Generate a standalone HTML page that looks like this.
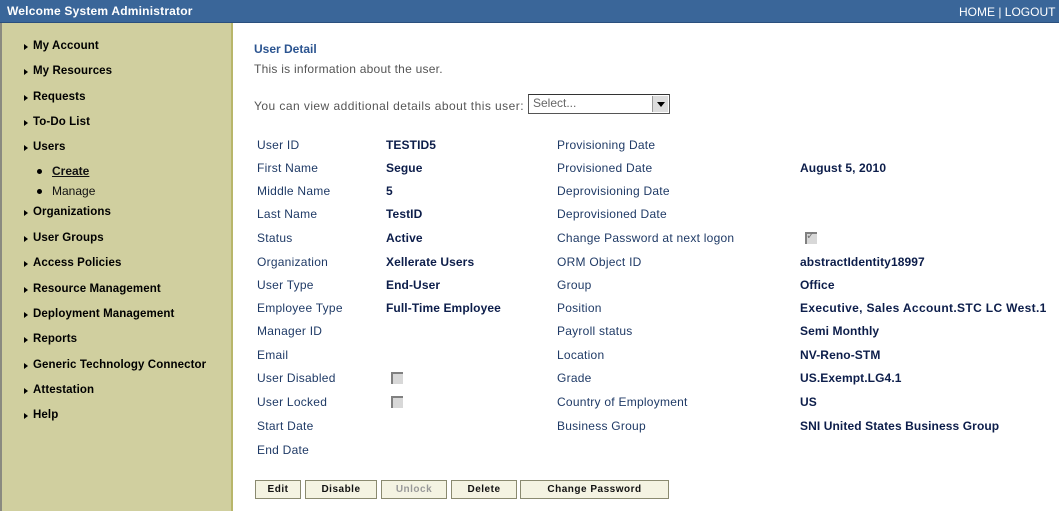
<!DOCTYPE html><html><head><style>
body{margin:0;width:1059px;height:511px;overflow:hidden;background:#fff;font-family:"Liberation Sans",Arial,sans-serif;position:relative}
.hdr{position:absolute;left:0;top:0;width:1059px;height:22px;background:#3a6699;border-bottom:1px solid #2a4f7d;color:#fff;font-size:12px;white-space:nowrap;overflow:hidden}
.side{position:absolute;left:0;top:23px;width:233px;height:488px;background:#d0cf9f;border-left:2px solid #8a8a80;border-right:2px solid #b8b66a;box-sizing:border-box}
.m{position:absolute;left:33px;font-size:11.5px;font-weight:bold;color:#000;transform:translateY(-50%);letter-spacing:.1px}
.m:before{content:"";position:absolute;left:-9px;top:4px;border-left:4px solid #000;border-top:3.5px solid transparent;border-bottom:3.5px solid transparent}
.s{position:absolute;left:52px;font-size:12px;color:#111;transform:translateY(-50%)}
.s:before{content:"";position:absolute;left:-15px;top:5px;width:5px;height:5px;border-radius:50%;background:#000}
.t{position:absolute;font-size:12px;color:#1f3a66;transform:translateY(-50%);white-space:nowrap;letter-spacing:.25px}
.v{position:absolute;font-size:12px;font-weight:bold;color:#0c1d4a;transform:translateY(-50%);white-space:nowrap;letter-spacing:.1px}
.cb{position:absolute;width:12px;height:12px;background:#d8d8d8;border-top:2px solid #808080;border-left:2px solid #808080;box-sizing:border-box}
.b{position:absolute;top:480px;height:19px;background:#f4f3e2;border:1px solid #8a8a70;box-sizing:border-box;font-size:10px;font-weight:bold;letter-spacing:.5px;text-align:center;line-height:17px;color:#111}
</style></head><body>
<div class="hdr"><span style="position:absolute;left:7px;top:4px;font-weight:bold;letter-spacing:.2px">Welcome System Administrator</span><span style="position:absolute;left:959px;top:5px">HOME | LOGOUT | A</span></div>
<div class="side"></div>
<div class="m" style="top:46px">My Account</div>
<div class="m" style="top:71px">My Resources</div>
<div class="m" style="top:97px">Requests</div>
<div class="m" style="top:122px">To-Do List</div>
<div class="m" style="top:147px">Users</div>
<div class="s" style="top:171px;font-weight:bold;text-decoration:underline">Create</div>
<div class="s" style="top:191px">Manage</div>
<div class="m" style="top:212px">Organizations</div>
<div class="m" style="top:238px">User Groups</div>
<div class="m" style="top:263px">Access Policies</div>
<div class="m" style="top:289px">Resource Management</div>
<div class="m" style="top:314px">Deployment Management</div>
<div class="m" style="top:339px">Reports</div>
<div class="m" style="top:365px">Generic Technology Connector</div>
<div class="m" style="top:390px">Attestation</div>
<div class="m" style="top:415px">Help</div>

<div class="t" style="left:254px;top:49px;font-weight:bold;color:#2b5490;letter-spacing:0">User Detail</div>
<div class="t" style="left:254px;top:69px;color:#555">This is information about the user.</div>
<div class="t" style="left:254px;top:106px;color:#555;letter-spacing:.45px">You can view additional details about this user:</div>
<div style="position:absolute;left:528px;top:94px;width:142px;height:20px;border:1px solid #555;border-top-color:#333;box-sizing:border-box;background:#fff;font-size:12px;color:#666;padding:1px 4px">Select...<div style="position:absolute;right:1px;top:1px;width:15px;height:16px;background:#ddd;border-left:1px solid #999"><div style="position:absolute;left:4px;top:6px;border-top:5px solid #000;border-left:4px solid transparent;border-right:4px solid transparent"></div></div></div>

<div class="t" style="left:257px;top:145px">User ID</div><div class="v" style="left:386px;top:145px">TESTID5</div><div class="t" style="left:557px;top:145px">Provisioning Date</div>
<div class="t" style="left:257px;top:168px">First Name</div><div class="v" style="left:386px;top:168px">Segue</div><div class="t" style="left:557px;top:168px">Provisioned Date</div><div class="v" style="left:800px;top:168px">August 5, 2010</div>
<div class="t" style="left:257px;top:191px">Middle Name</div><div class="v" style="left:386px;top:191px">5</div><div class="t" style="left:557px;top:191px">Deprovisioning Date</div>
<div class="t" style="left:257px;top:214px">Last Name</div><div class="v" style="left:386px;top:214px">TestID</div><div class="t" style="left:557px;top:214px">Deprovisioned Date</div>
<div class="t" style="left:257px;top:238px">Status</div><div class="v" style="left:386px;top:238px">Active</div><div class="t" style="left:557px;top:238px">Change Password at next logon</div>
<div class="cb" style="left:805px;top:232px"></div><div style="position:absolute;left:806px;top:229px;font-size:11px;color:#777">✓</div>
<div class="t" style="left:257px;top:262px">Organization</div><div class="v" style="left:386px;top:262px">Xellerate Users</div><div class="t" style="left:557px;top:262px">ORM Object ID</div><div class="v" style="left:800px;top:262px">abstractIdentity18997</div>
<div class="t" style="left:257px;top:285px">User Type</div><div class="v" style="left:386px;top:285px">End-User</div><div class="t" style="left:557px;top:285px">Group</div><div class="v" style="left:800px;top:285px">Office</div>
<div class="t" style="left:257px;top:308px">Employee Type</div><div class="v" style="left:386px;top:308px">Full-Time Employee</div><div class="t" style="left:557px;top:308px">Position</div><div class="v" style="left:800px;top:308px;letter-spacing:.35px">Executive, Sales Account.STC LC West.1</div>
<div class="t" style="left:257px;top:331px">Manager ID</div><div class="t" style="left:557px;top:331px">Payroll status</div><div class="v" style="left:800px;top:331px">Semi Monthly</div>
<div class="t" style="left:257px;top:355px">Email</div><div class="t" style="left:557px;top:355px">Location</div><div class="v" style="left:800px;top:355px">NV-Reno-STM</div>
<div class="t" style="left:257px;top:378px">User Disabled</div><div class="cb" style="left:391px;top:372px"></div><div class="t" style="left:557px;top:378px">Grade</div><div class="v" style="left:800px;top:378px">US.Exempt.LG4.1</div>
<div class="t" style="left:257px;top:402px">User Locked</div><div class="cb" style="left:391px;top:396px"></div><div class="t" style="left:557px;top:402px">Country of Employment</div><div class="v" style="left:800px;top:402px">US</div>
<div class="t" style="left:257px;top:426px">Start Date</div><div class="t" style="left:557px;top:426px">Business Group</div><div class="v" style="left:800px;top:426px">SNI United States Business Group</div>
<div class="t" style="left:257px;top:450px">End Date</div>

<div class="b" style="left:255px;width:46px">Edit</div>
<div class="b" style="left:305px;width:72px">Disable</div>
<div class="b" style="left:381px;width:66px;color:#999">Unlock</div>
<div class="b" style="left:451px;width:66px">Delete</div>
<div class="b" style="left:520px;width:149px">Change Password</div>
</body></html>
